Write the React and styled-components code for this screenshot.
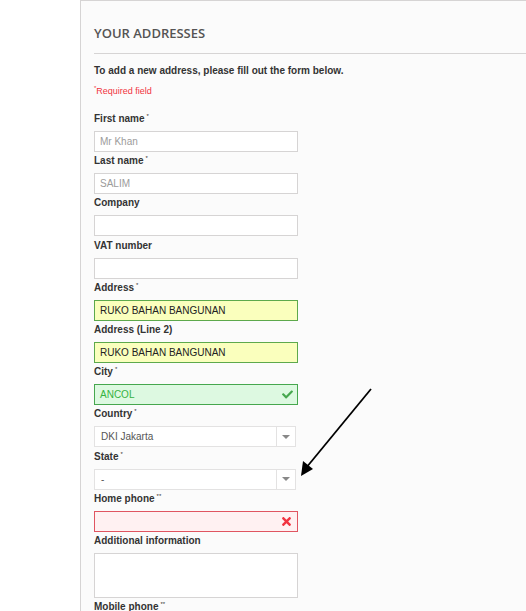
import React from "react";
import styled, { createGlobalStyle } from "styled-components";
import { FaCheck, FaTimes } from "react-icons/fa";

const Global = createGlobalStyle`
  html, body { margin: 0; padding: 0; background: #fff; }
  body { font-family: "Liberation Sans", Arial, sans-serif; color: #333; }
  * { box-sizing: border-box; }
  sup { line-height: 0; vertical-align: baseline; position: relative; top: -4px; }
`;

const Page = styled.div`
  position: relative;
  width: 526px;
  height: 611px;
  overflow: hidden;
  padding-left: 80px;
  background: #fff;
`;

const Panel = styled.div`
  height: 100%;
  background: #fbfbfb;
  border-left: 1px solid #d6d4d4;
  border-top: 1px solid #d6d4d4;
  padding-left: 13px;
`;

const Title = styled.h3`
  margin: 0;
  padding: 22px 0 10px;
  line-height: 20px;
  font-family: "Open Sans", sans-serif;
  font-weight: 600;
  font-size: 13px;
  color: #555454;
  text-transform: uppercase;
  border-bottom: 1px solid #d6d4d4;
`;

const Intro = styled.p`
  margin: 10px 0 0;
  font-size: 10px;
  line-height: 14px;
  font-weight: bold;
  color: #333;
`;

const Required = styled.p`
  margin: 6px 0 14px;
  height: 14px;
  font-size: 9px;
  line-height: 14px;
  color: #f13340;
  sup { font-size: 6px; }
`;

const Group = styled.div`
  display: flex;
  flex-direction: column;
  gap: 5px;
  padding-bottom: 2.2px;
`;

const Label = styled.label`
  display: block;
  height: 14px;
  font-size: 10px;
  font-weight: bold;
  line-height: 14px;
  color: #333;
  sup { font-size: 6px; font-weight: normal; margin-left: 2px; }
`;

const stateStyles = {
  normal: { bg: "#fff", border: "#d6d4d4", color: "#9c9b9b" },
  auto: { bg: "#faffbd", border: "#5da94c", color: "#222" },
  ok: { bg: "#ddf9e1", border: "#46a74e", color: "#35b33f" },
  error: { bg: "#fff1f2", border: "#e05561", color: "#f13340" },
};

const Field = styled.div`
  position: relative;
  width: 204px;
  height: ${(p) => (p.$tall ? "45px" : "21px")};
  background: ${(p) => stateStyles[p.$state].bg};
  border: 1px solid ${(p) => stateStyles[p.$state].border};
  color: ${(p) => stateStyles[p.$state].color};
  font-size: 10px;
  line-height: 19px;
  padding: 0 8px 0 5px;
  display: flex;
  align-items: center;
  justify-content: space-between;
`;

const IconWrap = styled.span`
  display: flex;
  align-items: center;
  color: ${(p) => p.$color};
  margin-right: -4px;
`;

const Select = styled.div`
  width: 202px;
  height: 21px;
  background: #fff;
  border: 1px solid #e3e2e2;
  display: flex;
  align-items: center;
  font-size: 10px;
  color: #555;
  padding-left: 6px;
`;

const SelectText = styled.span`
  flex: 1;
`;

const SelectButton = styled.span`
  width: 19px;
  height: 19px;
  border-left: 1px solid #e3e2e2;
  display: flex;
  align-items: center;
  justify-content: center;
  &::after {
    content: "";
    border-left: 4px solid transparent;
    border-right: 4px solid transparent;
    border-top: 4px solid #888;
  }
`;

const Arrow = styled.svg`
  position: absolute;
  left: 0;
  top: 0;
  pointer-events: none;
`;

const fields = [
  { label: "First name", req: "*", value: "Mr Khan", state: "normal" },
  { label: "Last name", req: "*", value: "SALIM", state: "normal" },
  { label: "Company", value: "", state: "normal" },
  { label: "VAT number", value: "", state: "normal" },
  { label: "Address", req: "*", value: "RUKO BAHAN BANGUNAN", state: "auto" },
  { label: "Address (Line 2)", value: "RUKO BAHAN BANGUNAN", state: "auto" },
  { label: "City", req: "*", value: "ANCOL", state: "ok" },
  { label: "Country", req: "*", value: "DKI Jakarta", select: true },
  { label: "State", req: "*", value: "-", select: true },
  { label: "Home phone", req: "**", value: "", state: "error" },
  { label: "Additional information", value: "", state: "normal", tall: true },
  { label: "Mobile phone", req: "**", value: "", state: "normal" },
];

export default function App() {
  return (
    <>
      <Global />
      <Page>
        <Panel>
          <Title>Your addresses</Title>
          <Intro>To add a new address, please fill out the form below.</Intro>
          <Required>
            <sup>*</sup>Required field
          </Required>
          {fields.map((f) => (
            <Group key={f.label}>
              <Label>
                {f.label}
                {f.req && <sup>{f.req}</sup>}
              </Label>
              {f.select ? (
                <Select>
                  <SelectText>{f.value}</SelectText>
                  <SelectButton />
                </Select>
              ) : (
                <Field $state={f.state} $tall={f.tall}>
                  <span>{f.value}</span>
                  {f.state === "ok" && (
                    <IconWrap $color="#46a74e">
                      <FaCheck size={11} />
                    </IconWrap>
                  )}
                  {f.state === "error" && (
                    <IconWrap $color="#f13340">
                      <FaTimes size={13} />
                    </IconWrap>
                  )}
                </Field>
              )}
            </Group>
          ))}
        </Panel>
        <Arrow width="526" height="611" viewBox="0 0 526 611">
          <line x1="371" y1="389" x2="306" y2="468" stroke="#000" strokeWidth="1.8" />
          <polygon points="301,476 303,461 313,469" fill="#000" />
        </Arrow>
      </Page>
    </>
  );
}
